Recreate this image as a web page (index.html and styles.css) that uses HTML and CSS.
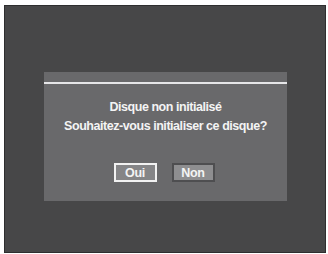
FILE: index.html
```html
<!DOCTYPE html>
<html lang="fr">
<head>
<meta charset="utf-8">
<link rel="stylesheet" href="styles.css">
</head>
<body>
<div class="screen">
  <div class="dialog">
    <div class="rule"></div>
    <div class="message">
      <p>Disque non initialisé</p>
      <p>Souhaitez-vous initialiser ce disque?</p>
    </div>
    <div class="buttons">
      <span class="btn btn-selected">Oui</span>
      <span class="btn">Non</span>
    </div>
  </div>
</div>
</body>
</html>
```
FILE: styles.css
```css
html, body {
  margin: 0;
  padding: 0;
  background: #ffffff;
}
body {
  width: 328px;
  height: 254px;
  overflow: hidden;
  font-family: "Liberation Sans", Arial, sans-serif;
}
.screen {
  box-sizing: border-box;
  margin: 5px 0 0 4px;
  width: 322px;
  height: 248px;
  background: #474748;
  border: 1px solid #2e2e2f;
  padding: 66px 0 0 39px;
}
.dialog {
  width: 243px;
  height: 129px;
  background: #69696b;
  padding-top: 10px;
  box-sizing: border-box;
  display: flex;
  flex-direction: column;
  align-items: center;
}
.rule {
  align-self: stretch;
  height: 2px;
  background: #e6e6e8;
}
.message {
  margin-top: 14px;
  color: #f4f4f4;
  font-weight: bold;
  font-size: 12.5px;
  letter-spacing: -0.45px;
  line-height: 19px;
  text-align: center;
}
.message p {
  margin: 0;
}
.buttons {
  margin-top: 27px;
  display: flex;
  gap: 15px;
  margin-right: 3px;
}
.btn {
  box-sizing: border-box;
  width: 43px;
  height: 19px;
  display: flex;
  align-items: center;
  justify-content: center;
  font-weight: bold;
  font-size: 12.5px;
  letter-spacing: -0.3px;
  color: #f4f4f4;
  background: #8e8e90;
  border: 2px solid #4e4e50;
}
.btn-selected {
  background: #858587;
  border-color: #f2f2f2;
}
```
